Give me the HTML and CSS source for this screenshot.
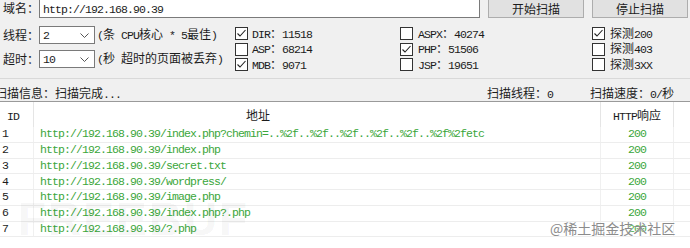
FILE: index.html
```html
<!DOCTYPE html>
<html lang="zh-CN">
<head>
<meta charset="utf-8">
<title>扫描</title>
<link rel="stylesheet" href="styles.css">
</head>
<body>
<div class="app">
  <div class="toprow">
    <span class="lbl">域名：</span>
    <div class="input"><span class="m">http://192.168.90.39</span></div>
    <button class="btn">开始扫描</button>
    <button class="btn">停止扫描</button>
  </div>

  <div class="options">
    <div class="params">
      <div class="prow">
        <span class="lbl">线程：</span>
        <div class="select"><span class="m">2</span><svg class="chev" width="9" height="5" viewBox="0 0 9 5"><path d="M0.5 0.5 L4.5 4.5 L8.5 0.5" fill="none" stroke="#555" stroke-width="1"/></svg></div>
        <span class="hint"><span class="m">(</span>条<span class="m"> CPU</span>核心<span class="m"> * 5</span>最佳<span class="m">)</span></span>
      </div>
      <div class="prow">
        <span class="lbl">超时：</span>
        <div class="select"><span class="m">10</span><svg class="chev" width="9" height="5" viewBox="0 0 9 5"><path d="M0.5 0.5 L4.5 4.5 L8.5 0.5" fill="none" stroke="#555" stroke-width="1"/></svg></div>
        <span class="hint"><span class="m">(</span>秒<span class="m"> </span>超时的页面被丢弃<span class="m">)</span></span>
      </div>
    </div>

    <div class="checks">
      <label class="chk"><span class="box on"><svg width="11" height="11" viewBox="0 0 11 11"><path d="M1.5 5.5 L4 8 L9.5 2" fill="none" stroke="#222" stroke-width="1.1"/></svg></span><span class="cl"><span class="m">DIR</span>：<span class="m">11518</span></span></label>
      <label class="chk"><span class="box"></span><span class="cl"><span class="m">ASP</span>：<span class="m">68214</span></span></label>
      <label class="chk"><span class="box on"><svg width="11" height="11" viewBox="0 0 11 11"><path d="M1.5 5.5 L4 8 L9.5 2" fill="none" stroke="#222" stroke-width="1.1"/></svg></span><span class="cl"><span class="m">MDB</span>：<span class="m">9071</span></span></label>

      <label class="chk"><span class="box"></span><span class="cl c2"><span class="m">ASPX</span>：<span class="m">40274</span></span></label>
      <label class="chk"><span class="box on"><svg width="11" height="11" viewBox="0 0 11 11"><path d="M1.5 5.5 L4 8 L9.5 2" fill="none" stroke="#222" stroke-width="1.1"/></svg></span><span class="cl c2"><span class="m">PHP</span>：<span class="m">51506</span></span></label>
      <label class="chk"><span class="box"></span><span class="cl c2"><span class="m">JSP</span>：<span class="m">19651</span></span></label>

      <label class="chk"><span class="box on"><svg width="11" height="11" viewBox="0 0 11 11"><path d="M1.5 5.5 L4 8 L9.5 2" fill="none" stroke="#222" stroke-width="1.1"/></svg></span><span class="cl c2">探测<span class="m">200</span></span></label>
      <label class="chk"><span class="box"></span><span class="cl c2">探测<span class="m">403</span></span></label>
      <label class="chk"><span class="box"></span><span class="cl c2">探测<span class="m">3XX</span></span></label>
    </div>
  </div>

  <div class="status">
    <span class="info">扫描信息：扫描完成<span class="m">...</span></span>
    <span>扫描线程：<span class="m">0</span></span>
    <span>扫描速度：<span class="m">0/</span>秒</span>
  </div>

  <div class="list">
    <div class="head">
      <div class="hc hid"><span class="m">ID</span></div>
      <div class="hc haddr">地址</div>
      <div class="hc hcode"><span class="m">HTTP</span>响应</div>
      <div class="hc last"></div>
    </div>
    <div class="row"><div class="c cid m">1</div><div class="c curl m">http://192.168.90.39/index.php?chemin=..%2f..%2f..%2f..%2f..%2f..%2f%2fetc</div><div class="c ccode m">200</div><div class="c last"></div></div>
    <div class="row"><div class="c cid m">2</div><div class="c curl m">http://192.168.90.39/index.php</div><div class="c ccode m">200</div><div class="c last"></div></div>
    <div class="row"><div class="c cid m">3</div><div class="c curl m">http://192.168.90.39/secret.txt</div><div class="c ccode m">200</div><div class="c last"></div></div>
    <div class="row"><div class="c cid m">4</div><div class="c curl m">http://192.168.90.39/wordpress/</div><div class="c ccode m">200</div><div class="c last"></div></div>
    <div class="row"><div class="c cid m">5</div><div class="c curl m">http://192.168.90.39/image.php</div><div class="c ccode m">200</div><div class="c last"></div></div>
    <div class="row"><div class="c cid m">6</div><div class="c curl m">http://192.168.90.39/index.php?.php</div><div class="c ccode m">200</div><div class="c last"></div></div>
    <div class="row"><div class="c cid m">7</div><div class="c curl m">http://192.168.90.39/?.php</div><div class="c ccode m">200</div><div class="c last"></div></div>
  </div>

  <div class="ghost">FREEBUF</div>
  <div class="wm">@稀土掘金技术社区</div>
</div>
</body>
</html>
```

FILE: styles.css
```css
* { box-sizing: border-box; }
html, body { margin: 0; padding: 0; }
body {
  width: 690px;
  height: 248px;
  overflow: hidden;
  background: #f0f0f0;
  font-family: "Noto Sans CJK SC", "Noto Sans", sans-serif;
  font-size: 12px;
  color: #1c1c1c;
}
.app { position: relative; width: 690px; height: 248px; overflow: hidden; }

.m {
  font-family: "Liberation Mono", "Noto Sans CJK SC", monospace;
  font-size: 11.5px;
  letter-spacing: -0.9px;
}

/* top row */
.toprow { display: flex; align-items: center; height: 20px; margin-top: -2px; }
.lbl { width: 36px; margin-left: 3px; line-height: 14px; white-space: nowrap; flex: none; }
.input {
  width: 441px; height: 20px; flex: none;
  background: #fff; border: 1px solid #7a7a7a;
  padding: 2px 0 0 3px;
  display: flex; align-items: center;
}
.btn {
  flex: none;
  width: 96px; height: 20px; margin: 0 0 0 8px; padding: 2px 0 0;
  background: #e1e1e1; border: 1px solid #adadad;
  font: inherit; color: #1c1c1c; line-height: 14px;
}

/* options */
.options { display: flex; height: 61px; border-bottom: 1px solid #d9d9d9; }
.params { width: 235px; flex: none; padding-top: 8px; display: flex; flex-direction: column; gap: 6px; }
.prow { display: flex; align-items: center; height: 18px; }
.select {
  width: 56px; height: 18px; flex: none;
  background: #fff; border: 1px solid #7a7a7a;
  display: flex; align-items: center; justify-content: space-between;
  padding: 0 5px 0 3px;
}
.hint { margin-left: 2px; white-space: nowrap; line-height: 14px; }

.checks {
  padding-top: 8px;
  display: grid;
  grid-template-columns: 165px 192px 98px;
  grid-template-rows: repeat(3, 15.5px);
  grid-auto-flow: column;
}
.chk { display: flex; align-items: center; white-space: nowrap; }
.box {
  width: 13px; height: 13px; flex: none;
  background: #fff; border: 1px solid #333;
  display: flex; align-items: center; justify-content: center;
}
.cl { margin-left: 4px; line-height: 14px; }
.cl.c2 { margin-left: 5px; }

/* status */
.status {
  height: 22px; padding-top: 7px;
  display: grid; grid-template-columns: 1fr 103px 100px;
  line-height: 14px; white-space: nowrap;
}
.info { margin-left: -5px; }

/* list */
.list { background: #fff; border-top: 1px solid #9a9a9a; height: 147px; }
.head, .row { display: grid; grid-template-columns: 34px 567px 73px 1fr; }
.head { height: 25px; line-height: 25px; color: #1c1c1c; }
.hc { border-right: 1px solid #e5e5e5; white-space: nowrap; }
.hc.last, .c.last { border-right: none; }
.hid { padding-left: 7px; }
.haddr { padding-left: 212px; }
.hcode { text-align: center; }

.row { height: 15.75px; border-bottom: 1px solid #ededed; }
.c {
  border-right: 1px solid #f0f0f0;
  display: flex; align-items: center;
  white-space: nowrap; overflow: hidden;
  line-height: 14px;
}
.cid { padding-left: 2px; color: #1c1c1c; }
.curl { padding-left: 6px; color: #3aa63a; }
.ccode { justify-content: center; color: #3aa63a; }

/* overlays */
.ghost {
  position: absolute; left: 18px; top: 194px;
  font-family: "Liberation Sans", sans-serif; font-weight: bold;
  font-size: 46px; letter-spacing: 2px; line-height: 50px;
  color: rgba(0, 0, 0, 0.05);
  pointer-events: none;
}
.wm {
  position: absolute; left: 550px; top: 218px;
  font-size: 14px; line-height: 20px;
  color: #8c8c8c;
  text-shadow: 0 0 2px #fff;
}
```
